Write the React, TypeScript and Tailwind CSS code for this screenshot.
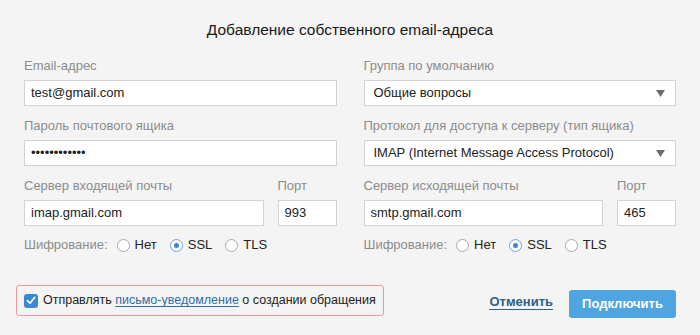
import React from 'react';

const font = { fontFamily: '"Liberation Sans", Arial, sans-serif' };

const Label = ({ children }: { children: React.ReactNode }) => (
  <div className="text-[13px] leading-4 text-[#8c8c8c] mb-[6px] whitespace-nowrap">{children}</div>
);

const TextBox = ({ value, className = '' }: { value: string; className?: string }) => (
  <div className={`h-[26px] bg-white border border-[#d3d3d3] flex items-center pl-[6px] text-[13px] text-[#222] ${className}`}>
    {value}
  </div>
);

const SelectBox = ({ value }: { value: string }) => (
  <div className="h-[26px] bg-white border border-[#d3d3d3] flex items-center justify-between pl-[9px] pr-[10px] text-[13px] text-[#222]">
    <span>{value}</span>
    <svg width="9" height="7" viewBox="0 0 9 7">
      <path d="M0 0 H9 L4.5 7 Z" fill="#6b6b6b" />
    </svg>
  </div>
);

const Radio = ({ label, checked }: { label: string; checked?: boolean }) => (
  <div className="flex items-center gap-[5px] mr-[13px]">
    <span
      className={`w-[13px] h-[13px] rounded-full bg-white border flex items-center justify-center ${
        checked ? 'border-[#6aa6dc]' : 'border-[#a8a8a8]'
      }`}
    >
      {checked && <span className="w-[5px] h-[5px] rounded-full bg-[#3b86cf]" />}
    </span>
    <span className="text-[13px] text-[#222]">{label}</span>
  </div>
);

const Encryption = () => (
  <div className="flex items-center mt-[12px] h-[14px]">
    <span className="text-[13px] text-[#8c8c8c] mr-[9px]">Шифрование:</span>
    <Radio label="Нет" />
    <Radio label="SSL" checked />
    <Radio label="TLS" />
  </div>
);

const ServerBlock = ({ title, host, port }: { title: string; host: string; port: string }) => (
  <div>
    <div className="flex gap-[14px]">
      <div className="flex-1">
        <Label>{title}</Label>
        <TextBox value={host} />
      </div>
      <div className="w-[59px]">
        <Label>Порт</Label>
        <TextBox value={port} />
      </div>
    </div>
    <Encryption />
  </div>
);

export default function App() {
  return (
    <div className="w-[700px] h-[335px] bg-[#f4f4f4] overflow-hidden" style={font}>
      <div className="pt-[21px] h-[58px] text-center text-[15.5px] leading-[18px] text-[#1a1a1a]">
        Добавление собственного email-адреса
      </div>
      <div className="px-[24px] grid grid-cols-2 gap-x-[27px]">
        <div>
          <Label>Email-адрес</Label>
          <TextBox value="test@gmail.com" />
        </div>
        <div>
          <Label>Группа по умолчанию</Label>
          <SelectBox value="Общие вопросы" />
        </div>
        <div className="mt-[12px]">
          <Label>Пароль почтового ящика</Label>
          <TextBox value="••••••••••••" className="text-[12.5px]" />
        </div>
        <div className="mt-[12px]">
          <Label>Протокол для доступа к серверу (тип ящика)</Label>
          <SelectBox value="IMAP (Internet Message Access Protocol)" />
        </div>
        <div className="mt-[12px]">
          <ServerBlock title="Сервер входящей почты" host="imap.gmail.com" port="993" />
        </div>
        <div className="mt-[12px]">
          <ServerBlock title="Сервер исходящей почты" host="smtp.gmail.com" port="465" />
        </div>
      </div>
      <div className="flex items-start pl-[16px] pr-[24px] mt-[33px]">
        <div className="w-[368px] h-[31px] border border-[#eb9a9c] rounded-[3px] flex items-center pl-[7px] whitespace-nowrap overflow-hidden">
          <span className="w-[14px] h-[14px] shrink-0 rounded-[3px] bg-[#3b88d0] flex items-center justify-center mr-[5px]">
            <svg width="10" height="9" viewBox="0 0 10 9">
              <path d="M1.5 4.8 L4 7.2 L8.6 1.5" stroke="#fff" strokeWidth="1.8" fill="none" strokeLinecap="round" strokeLinejoin="round" />
            </svg>
          </span>
          <span className="text-[12.5px] text-[#222]">
            Отправлять{' '}
            <span className="text-[#2f6ea8] underline underline-offset-2">письмо-уведомление</span> о создании
            обращения
          </span>
        </div>
        <div className="flex-1" />
        <span className="mt-[9px] text-[13px] font-bold text-[#2d5f8c] border-b border-[#2d5f8c] leading-[15px] mr-[16px]">
          Отменить
        </span>
        <button className="mt-[5px] w-[107px] h-[28px] rounded-[3px] bg-[#4fa5e0] text-white text-[13px] font-bold">
          Подключить
        </button>
      </div>
    </div>
  );
}
